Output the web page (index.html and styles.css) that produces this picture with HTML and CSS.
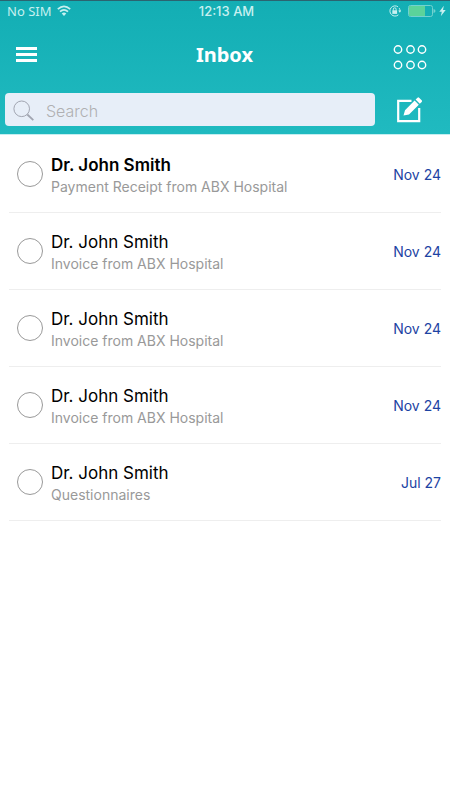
FILE: index.html
```html
<!DOCTYPE html>
<html lang="en">
<head>
<meta charset="utf-8">
<meta name="viewport" content="width=device-width, initial-scale=1">
<title>Inbox</title>
<link rel="stylesheet" href="styles.css">
</head>
<body>
<header class="header">
  <div class="status">
    <div class="status-side">
      <span class="carrier">No SIM</span>
      <svg width="14" height="12" viewBox="0 0 14 12" fill="none" stroke="currentColor" stroke-width="1.7" aria-hidden="true"><path d="M.8 4.2Q7-1.6 13.2 4.2M3 6.6Q7 3 11 6.6"/><path d="M4.7 8.5Q7 6.6 9.3 8.5L7 11Z" fill="currentColor" stroke="none"/></svg>
    </div>
    <span class="clock">12:13 AM</span>
    <div class="status-side status-end">
      <svg width="12" height="12" viewBox="0 0 12 12" fill="none" stroke="currentColor" aria-hidden="true"><path d="M9.1 1.9A5.1 5.1 0 1 0 9.4 9.8M10.2 3.1Q11 4.3 11 6"/><path d="M9.2 5.6H12.3L10.8 7.8Z" fill="currentColor" stroke="none"/><path d="M3.3 5.3h4.8v3.6H3.3z" fill="currentColor" stroke="none"/><path d="M4.3 5.6V4.2a1.4 1.4 0 0 1 2.8 0v1.4"/></svg>
      <svg class="battery" width="28" height="12" viewBox="0 0 28 12" aria-hidden="true"><rect x=".5" y=".5" width="24" height="11" rx="2" fill="none" stroke="#72d2d0"/><path d="M2 1h15v10H2a1 1 0 0 1-1-1V2a1 1 0 0 1 1-1z" fill="#5bd39b"/><path d="M25.5 4q2 .3 2 2t-2 2z" fill="#72d2d0"/></svg>
      <svg width="7" height="12" viewBox="0 0 7 12" fill="currentColor" aria-hidden="true"><path d="M4.8.8.3 6.7h2.5L1.8 11.2 6.7 4.9H4Z"/></svg>
    </div>
  </div>
  <div class="nav">
    <button class="icon-button" type="button" aria-label="Menu">
      <svg width="22" height="16" viewBox="0 0 22 16" fill="currentColor"><path d="M0 0h21v3H0zM0 6h21v3H0zM0 12h21v3H0z"/></svg>
    </button>
    <h1 class="title">Inbox</h1>
    <button class="icon-button icon-end" type="button" aria-label="Apps">
      <svg width="34" height="25" viewBox="0 0 34 25" fill="none" stroke="currentColor" stroke-width="1.4"><circle cx="5" cy="4.5" r="3.7"/><circle cx="17.5" cy="4.5" r="3.7"/><circle cx="29" cy="4.5" r="3.7"/><circle cx="5" cy="20" r="3.7"/><circle cx="17.5" cy="20" r="3.7"/><circle cx="29" cy="20" r="3.7"/></svg>
    </button>
  </div>
  <div class="tools">
    <label class="search">
      <svg width="22" height="22" viewBox="0 0 22 22" fill="none" stroke="#a1a5b1" aria-hidden="true"><circle cx="8.7" cy="8.8" r="7.8"/><path d="m14.3 14.5 6 5.6" stroke-width="1.8"/></svg>
      <input class="search-input" type="search" placeholder="Search" aria-label="Search">
    </label>
    <button class="icon-button" type="button" aria-label="Compose">
      <svg width="26" height="26" viewBox="0 0 26 26"><path d="M14.5 3.8H1.2v20.4h21V11" fill="none" stroke="currentColor" stroke-width="2.2"/><path d="M6.5 18.4 8 13.2 17.6 3.6l4.2 4.2L12 17.4ZM18.6 2.6 20.5.7q.8-.7 1.6 0l2.6 2.6q.8.8 0 1.6L22.8 6.8Z" fill="currentColor"/></svg>
    </button>
  </div>
</header>
<main>
  <ul class="messages">
    <li class="message unread">
      <input class="pick" type="checkbox" id="m1">
      <label class="text" for="m1"><span class="sender">Dr. John Smith</span><span class="subject">Payment Receipt from ABX Hospital</span></label>
      <time class="date">Nov 24</time>
    </li>
    <li class="message">
      <input class="pick" type="checkbox" id="m2">
      <label class="text" for="m2"><span class="sender">Dr. John Smith</span><span class="subject">Invoice from ABX Hospital</span></label>
      <time class="date">Nov 24</time>
    </li>
    <li class="message">
      <input class="pick" type="checkbox" id="m3">
      <label class="text" for="m3"><span class="sender">Dr. John Smith</span><span class="subject">Invoice from ABX Hospital</span></label>
      <time class="date">Nov 24</time>
    </li>
    <li class="message">
      <input class="pick" type="checkbox" id="m4">
      <label class="text" for="m4"><span class="sender">Dr. John Smith</span><span class="subject">Invoice from ABX Hospital</span></label>
      <time class="date">Nov 24</time>
    </li>
    <li class="message">
      <input class="pick" type="checkbox" id="m5">
      <label class="text" for="m5"><span class="sender">Dr. John Smith</span><span class="subject">Questionnaires</span></label>
      <time class="date">Jul 27</time>
    </li>
  </ul>
</main>
</body>
</html>
```
FILE: styles.css
```css
* {
  box-sizing: border-box;
}

body {
  margin: 0;
  background: #fff;
  color: #000;
  font-family: Inter, "Liberation Sans", sans-serif;
}

svg {
  display: block;
  flex: none;
}

.header {
  padding-bottom: 8px;
  border-top: 1px solid #2b6470;
  border-bottom: 1px solid #c4eef0;
  background: linear-gradient(#13aeb4, #20bac0);
  color: #fff;
}

.status,
.nav {
  display: grid;
  grid-template-columns: 1fr auto 1fr;
  align-items: center;
}

.status {
  height: 20px;
  padding: 0 4px 0 7px;
  color: #c8f0f0;
  font-size: 13px;
  line-height: 20px;
}

.status-side {
  display: flex;
  align-items: center;
  gap: 6px;
}

.status-end {
  justify-content: flex-end;
  gap: 3px;
}

.battery {
  margin-left: 4px;
}

.carrier {
  font-family: "Noto Sans", sans-serif;
}

.clock {
  font-weight: 500;
}

.nav {
  height: 68px;
  margin-bottom: 4px;
  padding: 0 23px 0 16px;
  grid-template-columns: 36px 1fr 36px;
}

.title {
  margin: 0;
  padding-left: 6px;
  font: 700 20px/28px "Noto Sans", sans-serif;
  text-align: center;
}

.icon-button {
  justify-self: start;
  padding: 0;
  border: 0;
  background: none;
  color: #fff;
}

.icon-end {
  justify-self: end;
  padding-top: 5px;
}

.tools {
  display: flex;
  align-items: center;
  gap: 22px;
  padding: 0 27px 0 5px;
}

.search {
  display: flex;
  flex: 1;
  align-items: center;
  gap: 11px;
  height: 33px;
  padding: 2px 8px 0;
  border-radius: 4px;
  background: #e7eef8;
}

.search-input {
  flex: 1;
  min-width: 0;
  padding: 0;
  border: 0;
  outline: 0;
  background: none;
  color: #333;
  font: 300 16px/24px Inter, sans-serif;
}

.search-input::placeholder {
  color: #b0b0b2;
}

.messages {
  margin: 0;
  padding: 1px 9px;
  list-style: none;
}

.message {
  display: flex;
  align-items: center;
  gap: 8px;
  height: 77px;
  padding-left: 8px;
  border-bottom: 1px solid #eee;
}

.pick {
  flex: none;
  width: 26px;
  height: 26px;
  margin: 0;
  border: 1px solid #999;
  border-radius: 50%;
  appearance: none;
}

.pick:checked {
  background: #20bac0;
}

.text {
  display: flex;
  flex: 1;
  flex-direction: column;
  padding-top: 4px;
}

.sender {
  font-size: 17px;
  line-height: 22px;
}

.unread .sender {
  font-weight: 600;
}

.subject {
  color: #999;
  font-size: 14px;
  line-height: 22px;
}

.date {
  color: #1d43a3;
  font-size: 14px;
}
```
